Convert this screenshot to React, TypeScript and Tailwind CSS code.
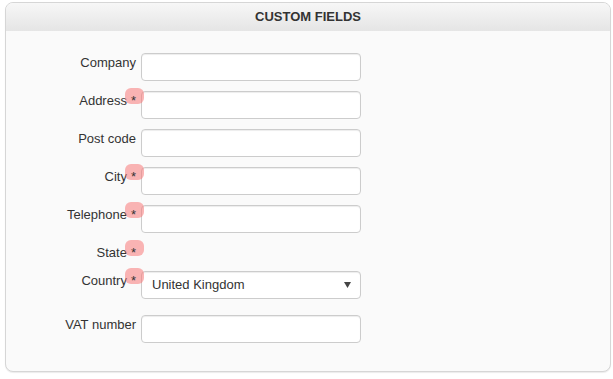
const font = { fontFamily: '"Liberation Sans", Arial, sans-serif' };

type Field = { label: string; required?: boolean; kind?: "text" | "none" | "select"; mb: string };

const fields: Field[] = [
  { label: "Company", mb: "mb-[10px]" },
  { label: "Address", required: true, mb: "mb-[10px]" },
  { label: "Post code", mb: "mb-[10px]" },
  { label: "City", required: true, mb: "mb-[10px]" },
  { label: "Telephone", required: true, mb: "mb-[10px]" },
  { label: "State", required: true, kind: "none", mb: "mb-[9px]" },
  { label: "Country", required: true, kind: "select", mb: "mb-[16px]" },
  { label: "VAT number", mb: "mb-0" },
];

function Label({ text, required }: { text: string; required?: boolean }) {
  return (
    <div className="w-[130px] shrink-0 pt-[1px] text-right text-[13px] leading-[18px] text-[#333]">
      <span>{text}</span>
      {required && (
        <span className="relative ml-[4px] inline-block">
          <span className="absolute -left-[6px] -top-[4px] z-10 h-[16px] w-[19px] rounded-[6px] bg-[rgba(247,120,120,0.55)]" />
          <span className="relative z-20">*</span>
        </span>
      )}
    </div>
  );
}

function Row({ f }: { f: Field }) {
  return (
    <div className={`flex items-start gap-[5px] ${f.mb}`}>
      <Label text={f.label} required={f.required} />
      {f.kind === "none" ? null : f.kind === "select" ? (
        <div className="flex h-[28px] w-[220px] items-center justify-between rounded-[4px] border border-[#ccc] bg-white pl-[10px] pr-[9px] text-[13px] text-[#333] shadow-[inset_0_1px_1px_rgba(0,0,0,0.075)]">
          <span>United Kingdom</span>
          <svg width="7" height="6" viewBox="0 0 7 6">
            <polygon points="0,0 7,0 3.5,6" fill="#444" />
          </svg>
        </div>
      ) : (
        <div className="h-[28px] w-[220px] rounded-[4px] border border-[#ccc] bg-white shadow-[inset_0_1px_1px_rgba(0,0,0,0.075)]" />
      )}
    </div>
  );
}

export default function App() {
  return (
    <div className="h-[379px] w-[613px] bg-white pl-[5px] pr-[2px] pt-[2px]" style={font}>
      <div className="overflow-hidden rounded-[8px] border border-[#d6d6d6] bg-[#fafafa] shadow-[0_1px_1px_rgba(0,0,0,0.08)]">
        <div className="flex h-[28px] items-center justify-center bg-gradient-to-b from-[#f7f7f7] to-[#e5e5e5] text-[13px] font-bold text-[#333]">
          CUSTOM FIELDS
        </div>
        <div className="pb-[28px] pt-[22px]">
          {fields.map((f) => (
            <Row key={f.label} f={f} />
          ))}
        </div>
      </div>
    </div>
  );
}
